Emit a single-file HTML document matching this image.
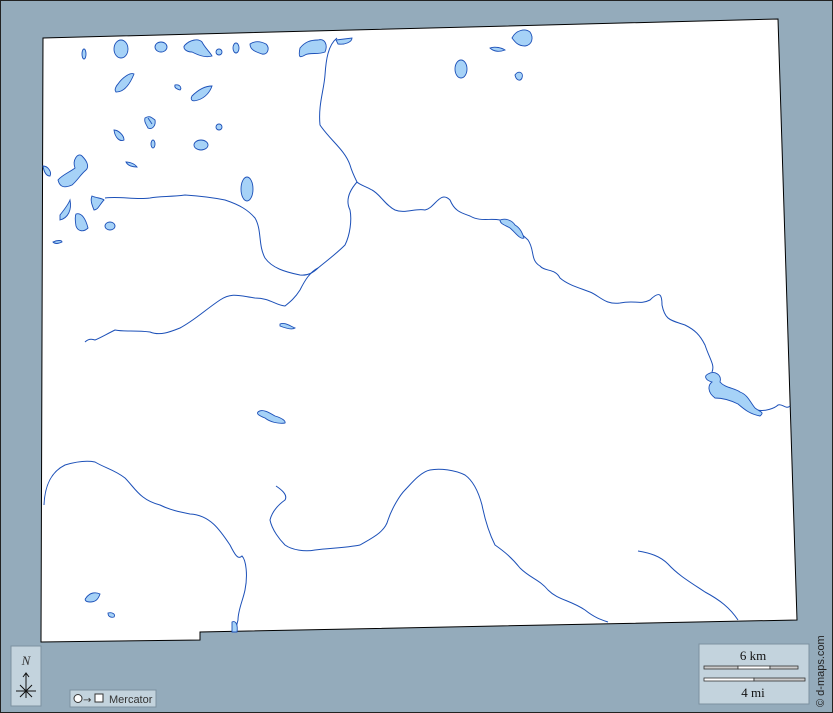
<!DOCTYPE html>
<html><head><meta charset="utf-8"><style>
html,body{margin:0;padding:0;width:833px;height:713px;overflow:hidden;background:#94abbb}
svg{display:block}
</style></head><body>
<svg width="833" height="713" viewBox="0 0 833 713" xmlns="http://www.w3.org/2000/svg">
<rect x="0.5" y="0.5" width="832" height="712" fill="#94abbb" stroke="#222" stroke-width="1"/>
<path d="M43,38 L778,19 L790,400 L797,620 L200,632 L200,640 L41,642 Z" fill="#fff" stroke="#000" stroke-width="1"/>
<g fill="none" stroke="#1c50b8" stroke-width="1">
<path d="M337,38 C328,45 326,60 325,75 C324,90 318,105 320,125 C330,140 345,150 350,165 C352,172 355,178 357,182 C360,185 365,186 372,190 C380,194 385,205 395,210 C405,214 415,208 425,210 C435,208 440,190 450,200 C455,212 462,213 470,216 C480,222 490,218 500,220 C510,226 520,232 528,240 C535,250 530,260 540,266 C545,272 555,268 560,278 C568,285 580,288 590,292 C600,296 605,305 620,303 C635,300 640,305 650,300 C660,290 662,295 662,305 C665,320 670,320 685,325 C695,330 700,335 705,345 C710,360 715,365 712,372"/>
<path d="M757,410 C765,412 775,408 778,405 C782,403 786,410 790,406"/>
<path d="M357,182 C350,190 345,200 350,210 C352,220 350,235 345,245 C335,255 325,262 318,268 C310,272 305,280 300,290 C295,298 290,302 285,306 C275,305 270,298 255,298 C240,296 232,292 220,300 C205,310 195,320 180,328 C170,332 160,336 150,332 C135,330 125,332 115,330 C105,335 100,338 95,340 C90,338 87,340 85,342"/>
<path d="M105,198 C120,196 135,200 150,198 C160,196 170,197 185,195 C200,196 215,198 225,200 C240,205 248,210 255,218 C262,230 258,245 265,258 C272,268 285,272 300,275 C308,276 314,272 318,268"/>
<path d="M44,505 C45,480 55,470 65,465 C75,462 85,460 95,462 C105,468 115,470 125,478 C135,488 140,500 160,505 C170,510 180,512 190,514 C210,515 220,530 230,545 C235,555 238,560 242,556 C246,560 248,575 245,590 C243,600 238,610 238,620 C236,628 235,632 234,632"/>
<path d="M276,486 C282,490 288,495 285,500 C278,505 272,512 270,520 C272,530 280,540 285,545 C292,550 305,552 315,550 C330,548 345,548 360,545 C372,538 385,532 388,520 C392,508 400,495 405,490 C410,485 420,472 430,470 C440,468 455,470 465,475 C472,480 478,490 482,505 C485,520 490,535 495,545 C505,552 512,558 520,568 C530,578 540,580 548,590 C558,600 570,600 585,610 C595,618 602,620 608,622"/>
<path d="M638,551 C650,553 660,556 668,564 C678,575 690,582 705,592 C720,600 730,608 738,620"/>
</g>
<g fill="#a6d2f7" stroke="#1c50b8" stroke-width="0.9">
<path d="M708,374 C715,370 722,375 720,382 C725,388 735,388 740,392 C748,395 750,402 755,408 C760,412 765,412 760,416 C750,414 745,410 738,404 C730,400 722,398 715,398 C707,392 708,385 712,382 C705,380 704,376 708,374 Z"/>
<path d="M500,220 C505,218 512,220 515,225 C520,228 522,232 524,238 C520,240 515,232 510,228 C505,225 500,224 500,220 Z"/>
<path d="M258,412 C262,408 270,413 275,416 C282,418 286,421 285,423 C278,424 270,422 265,418 C260,416 256,414 258,412 Z"/>
<path d="M280,324 C285,322 290,326 295,328 C292,330 285,328 280,326 Z"/>
<path d="M86,598 C90,592 96,592 100,594 C98,600 95,602 90,602 C86,602 84,600 86,598 Z"/>
<path d="M108,613 C112,612 116,614 114,617 C110,618 108,616 108,613 Z"/>
<path d="M232,622 C236,620 238,625 237,632 L232,632 Z"/>
<ellipse cx="121" cy="49" rx="7" ry="9"/>
<ellipse cx="84" cy="54" rx="2" ry="5"/>
<ellipse cx="161" cy="47" rx="6" ry="5"/>
<path d="M185,45 C190,40 198,38 202,42 C205,48 210,52 212,56 C205,58 198,55 192,52 C186,52 182,48 185,45 Z"/>
<ellipse cx="219" cy="52" rx="3" ry="3"/>
<ellipse cx="236" cy="48" rx="3" ry="5"/>
<path d="M250,44 C256,40 262,42 266,44 C270,48 268,55 262,54 C256,52 250,50 250,44 Z"/>
<path d="M300,48 C305,42 310,40 318,40 C325,38 328,45 325,52 C318,55 310,52 305,55 C300,58 298,58 300,48 Z"/>
<path d="M336,40 L352,38 C352,42 345,45 338,44 Z"/>
<path d="M118,84 C122,78 130,72 134,74 C130,84 124,92 116,92 C114,90 116,86 118,84 Z"/>
<path d="M175,85 C180,84 182,88 180,90 C177,89 174,88 175,85 Z"/>
<path d="M192,96 C198,90 205,86 212,86 C210,92 205,98 198,100 C192,102 190,100 192,96 Z"/>
<path d="M145,118 C150,115 152,118 155,120 C156,126 152,130 148,128 C146,124 144,122 145,118 Z"/>
<ellipse cx="219" cy="127" rx="3" ry="3"/>
<ellipse cx="201" cy="145" rx="7" ry="5"/>
<path d="M114,130 C118,130 124,135 124,140 C120,142 115,138 114,130 Z"/>
<ellipse cx="153" cy="144" rx="2" ry="4"/>
<path d="M126,162 C130,162 135,164 137,167 C132,167 128,166 126,162 Z"/>
<path d="M58,180 C62,175 70,172 75,168 C72,160 78,152 82,156 C86,160 90,166 86,170 C80,175 78,180 72,185 C65,188 60,188 58,180 Z"/>
<path d="M43,166 C48,166 52,172 50,176 C46,176 44,172 43,166 Z"/>
<ellipse cx="247" cy="189" rx="6" ry="12"/>
<path d="M92,196 C96,198 102,198 104,200 C100,204 98,210 94,210 C92,205 90,200 92,196 Z"/>
<path d="M60,215 C64,210 68,205 70,200 C72,210 68,218 60,220 Z"/>
<path d="M76,214 C82,212 86,220 88,228 C84,232 78,232 76,226 C75,220 75,216 76,214 Z"/>
<ellipse cx="110" cy="226" rx="5" ry="4"/>
<path d="M53,242 C57,240 62,240 62,242 C58,244 55,244 53,242 Z"/>
<path d="M512,38 C516,30 525,28 530,32 C534,38 532,45 525,46 C518,46 515,42 512,38 Z"/>
<path d="M490,48 C495,46 502,48 505,50 C500,52 494,52 490,48 Z"/>
<ellipse cx="461" cy="69" rx="6" ry="9"/>
<path d="M515,75 C518,70 524,72 522,78 C520,82 516,80 515,75 Z"/>
<path d="M148,118 L152,124" stroke="#1c50b8"/>
</g>
<rect x="11" y="646" width="30" height="60" fill="#c3d3dd" stroke="#7d92a0"/>
<text x="26" y="665" font-family="Liberation Serif, serif" font-style="italic" font-size="13" text-anchor="middle" fill="#333">N</text>
<g stroke="#111" stroke-width="1" fill="none">
<path d="M26,673 L26,698 M23,677 L26,673 L29,677 M16,691 L36,691 M20,685 L32,697 M32,685 L20,697"/>
</g>
<rect x="70" y="690" width="86" height="17" fill="#c3d3dd" stroke="#7d92a0"/>
<circle cx="78" cy="698.5" r="4" fill="#fff" stroke="#333"/>
<text x="83" y="703" font-family="DejaVu Sans, sans-serif" font-size="10" fill="#333">→</text>
<rect x="95" y="694" width="8" height="8" fill="#fff" stroke="#333"/>
<text x="109" y="703" font-family="Liberation Sans, sans-serif" font-size="11" fill="#333">Mercator</text>
<rect x="699" y="644" width="110" height="60" fill="#c3d3dd" stroke="#7d92a0"/>
<text x="753" y="660" font-family="Liberation Serif, serif" font-size="13" text-anchor="middle" fill="#111">6 km</text>
<rect x="704" y="666" width="34" height="3" fill="#ccc" stroke="#333" stroke-width="0.8"/>
<rect x="738" y="666" width="32" height="3" fill="#fff" stroke="#333" stroke-width="0.8"/>
<rect x="770" y="666" width="28" height="3" fill="#ccc" stroke="#333" stroke-width="0.8"/>
<rect x="704" y="678" width="50" height="3" fill="#fff" stroke="#333" stroke-width="0.8"/>
<rect x="754" y="678" width="51" height="3" fill="#ccc" stroke="#333" stroke-width="0.8"/>
<text x="753" y="697" font-family="Liberation Serif, serif" font-size="13" text-anchor="middle" fill="#111">4 mi</text>
<text transform="translate(824,707) rotate(-90)" font-family="Liberation Sans, sans-serif" font-size="11" fill="#222">© d-maps.com</text>
</svg>
</body></html>
